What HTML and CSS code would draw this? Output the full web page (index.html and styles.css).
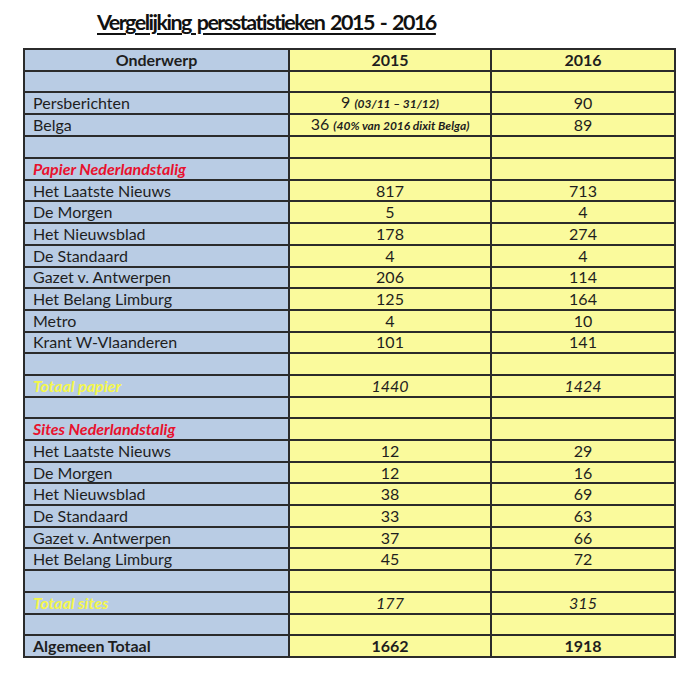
FILE: index.html
```html
<!DOCTYPE html>
<html>
<head>
<meta charset="utf-8">
<link rel="stylesheet" href="styles.css">
</head>
<body>
<h1 class="title">Vergelijking persstatistieken 2015 - 2016</h1>
<table class="stats">
  <colgroup><col class="c1"><col class="c2"><col class="c3"></colgroup>
  <tr class="head"><td>Onderwerp</td><td>2015</td><td>2016</td></tr>
  <tr><td></td><td></td><td></td></tr>
  <tr><td>Persberichten</td><td>9 <span class="note">(03/11 – 31/12)</span></td><td>90</td></tr>
  <tr><td>Belga</td><td>36 <span class="note">(40% van 2016 dixit Belga)</span></td><td>89</td></tr>
  <tr><td></td><td></td><td></td></tr>
  <tr><td class="section">Papier Nederlandstalig</td><td></td><td></td></tr>
  <tr><td>Het Laatste Nieuws</td><td>817</td><td>713</td></tr>
  <tr><td>De Morgen</td><td>5</td><td>4</td></tr>
  <tr><td>Het Nieuwsblad</td><td>178</td><td>274</td></tr>
  <tr><td>De Standaard</td><td>4</td><td>4</td></tr>
  <tr><td>Gazet v. Antwerpen</td><td>206</td><td>114</td></tr>
  <tr><td>Het Belang Limburg</td><td>125</td><td>164</td></tr>
  <tr><td>Metro</td><td>4</td><td>10</td></tr>
  <tr><td>Krant W-Vlaanderen</td><td>101</td><td>141</td></tr>
  <tr><td></td><td></td><td></td></tr>
  <tr class="subtotal"><td>Totaal papier</td><td>1440</td><td>1424</td></tr>
  <tr><td></td><td></td><td></td></tr>
  <tr><td class="section">Sites Nederlandstalig</td><td></td><td></td></tr>
  <tr><td>Het Laatste Nieuws</td><td>12</td><td>29</td></tr>
  <tr><td>De Morgen</td><td>12</td><td>16</td></tr>
  <tr><td>Het Nieuwsblad</td><td>38</td><td>69</td></tr>
  <tr><td>De Standaard</td><td>33</td><td>63</td></tr>
  <tr><td>Gazet v. Antwerpen</td><td>37</td><td>66</td></tr>
  <tr><td>Het Belang Limburg</td><td>45</td><td>72</td></tr>
  <tr><td></td><td></td><td></td></tr>
  <tr class="subtotal"><td>Totaal sites</td><td>177</td><td>315</td></tr>
  <tr><td></td><td></td><td></td></tr>
  <tr class="total"><td>Algemeen Totaal</td><td>1662</td><td>1918</td></tr>
</table>
</body>
</html>
```
FILE: styles.css
```css
html, body {
  margin: 0;
  padding: 0;
  background: #ffffff;
}
body {
  font-family: Lato, "Open Sans", sans-serif;
  color: #1e1e1e;
}
.title {
  margin: 0;
  padding: 9px 0 0 97px;
  height: 39px;
  box-sizing: border-box;
  font-size: 21.5px;
  font-weight: bold;
  letter-spacing: -1.5px;
  word-spacing: 2px;
  line-height: 26px;
  text-decoration: underline;
  text-decoration-thickness: 2px;
  text-underline-offset: 3px;
  color: #111;
}
.stats {
  margin: 9px 0 0 23px;
  width: 651px;
  border-collapse: collapse;
  table-layout: fixed;
  font-size: 16px;
}
.c1 { width: 265px; }
.c2 { width: 202px; }
.c3 { width: 184px; }
.stats td {
  border: 2px solid #2b2b2b;
  height: 19.7px;
  padding: 0;
  line-height: 18px;
  text-align: center;
  background: #fafa9c;
  white-space: nowrap;
  overflow: hidden;
}
.stats td:first-child {
  background: #b9cce4;
  text-align: left;
  padding-left: 8px;
}
.stats .head td { font-weight: bold; }
.stats .head td:first-child { text-align: center; padding-left: 0; }
.note {
  font-size: 12px;
  font-style: italic;
  font-weight: bold;
}
.section {
  color: #e8112d;
  font-weight: bold;
  font-style: italic;
}
.subtotal td {
  font-style: italic;
}
.subtotal td:first-child {
  color: #f4f74a;
  font-weight: bold;
}
.total td { font-weight: bold; }
```
